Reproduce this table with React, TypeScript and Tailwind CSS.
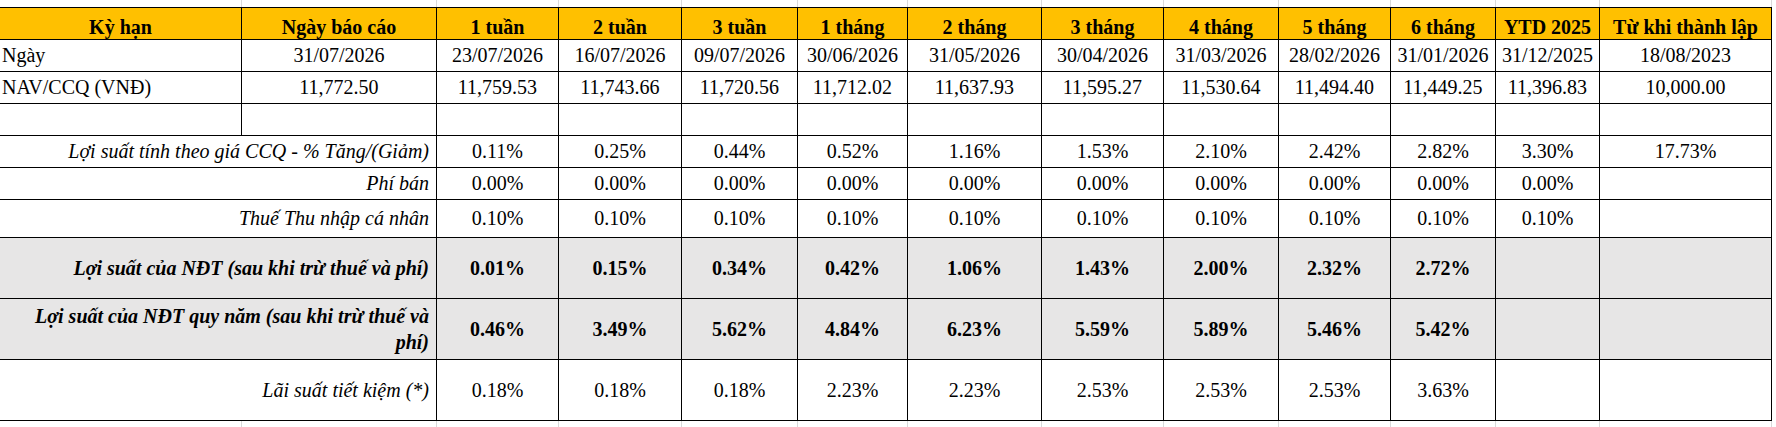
import React from "react";

const grid =
  "grid grid-cols-[242px_195px_122px_123px_116px_110px_134px_122px_115px_112px_105px_104px_172px] w-[1772px]";

const headers = [
  "Kỳ hạn",
  "Ngày báo cáo",
  "1 tuần",
  "2 tuần",
  "3 tuần",
  "1 tháng",
  "2 tháng",
  "3 tháng",
  "4 tháng",
  "5 tháng",
  "6 tháng",
  "YTD 2025",
  "Từ khi thành lập",
];

const dates = [
  "31/07/2026",
  "23/07/2026",
  "16/07/2026",
  "09/07/2026",
  "30/06/2026",
  "31/05/2026",
  "30/04/2026",
  "31/03/2026",
  "28/02/2026",
  "31/01/2026",
  "31/12/2025",
  "18/08/2023",
];

const navs = [
  "11,772.50",
  "11,759.53",
  "11,743.66",
  "11,720.56",
  "11,712.02",
  "11,637.93",
  "11,595.27",
  "11,530.64",
  "11,494.40",
  "11,449.25",
  "11,396.83",
  "10,000.00",
];

type Row = {
  label: React.ReactNode;
  values: string[];
  h: string;
  bold?: boolean;
  gray?: boolean;
  lh?: string;
};

const rows: Row[] = [
  {
    label: "Lợi suất tính theo giá CCQ - % Tăng/(Giảm)",
    values: ["0.11%", "0.25%", "0.44%", "0.52%", "1.16%", "1.53%", "2.10%", "2.42%", "2.82%", "3.30%", "17.73%"],
    h: "h-[32px]",
  },
  {
    label: "Phí bán",
    values: ["0.00%", "0.00%", "0.00%", "0.00%", "0.00%", "0.00%", "0.00%", "0.00%", "0.00%", "0.00%", ""],
    h: "h-[32px]",
  },
  {
    label: "Thuế Thu nhập cá nhân",
    values: ["0.10%", "0.10%", "0.10%", "0.10%", "0.10%", "0.10%", "0.10%", "0.10%", "0.10%", "0.10%", ""],
    h: "h-[38px]",
  },
  {
    label: "Lợi suất của NĐT (sau khi trừ thuế và phí)",
    values: ["0.01%", "0.15%", "0.34%", "0.42%", "1.06%", "1.43%", "2.00%", "2.32%", "2.72%", "", ""],
    h: "h-[61px]",
    bold: true,
    gray: true,
  },
  {
    label: (
      <>
        Lợi suất của NĐT quy năm (sau khi trừ thuế và
        <br />
        phí)
      </>
    ),
    values: ["0.46%", "3.49%", "5.62%", "4.84%", "6.23%", "5.59%", "5.89%", "5.46%", "5.42%", "", ""],
    h: "h-[61px]",
    bold: true,
    gray: true,
    lh: "leading-[26px]",
  },
  {
    label: "Lãi suất tiết kiệm (*)",
    values: ["0.18%", "0.18%", "0.18%", "2.23%", "2.23%", "2.53%", "2.53%", "2.53%", "3.63%", "", ""],
    h: "h-[61px]",
  },
];

function GridStrip({ h }: { h: string }) {
  return (
    <div className={grid}>
      {headers.map((_, i) => (
        <div key={i} className={`${h} border-r border-[#d9d9d9]`} />
      ))}
    </div>
  );
}

export default function App() {
  return (
    <div className="w-[1776px] h-[427px] bg-white text-black text-[20px] leading-[23px] [font-family:'Liberation_Serif','Times_New_Roman',serif] overflow-hidden">
      <GridStrip h="h-[7px]" />
      <div className={`${grid} border-t border-black`}>
        {headers.map((t) => (
          <div
            key={t}
            className="h-[32px] bg-[#ffc000] border-r border-b border-black flex items-end justify-center font-bold whitespace-nowrap"
          >
            {t}
          </div>
        ))}

        <div className="h-[32px] border-r border-b border-black flex items-center pl-[2px]">Ngày</div>
        {dates.map((d, i) => (
          <div key={i} className="h-[32px] border-r border-b border-black flex items-center justify-center whitespace-nowrap">
            {d}
          </div>
        ))}

        <div className="h-[32px] border-r border-b border-black flex items-center pl-[2px]">NAV/CCQ (VNĐ)</div>
        {navs.map((d, i) => (
          <div key={i} className="h-[32px] border-r border-b border-black flex items-center justify-center">
            {d}
          </div>
        ))}

        {headers.map((_, i) => (
          <div key={i} className="h-[32px] border-r border-b border-black" />
        ))}

        {rows.map((r, ri) => (
          <React.Fragment key={ri}>
            <div
              className={`${r.h} col-span-2 border-r border-b border-black flex items-center justify-end text-right italic pr-[7px] ${
                r.bold ? "font-bold" : ""
              } ${r.gray ? "bg-[#e7e6e6]" : ""} ${r.lh ?? ""}`}
            >
              <span>{r.label}</span>
            </div>
            {r.values.map((v, i) => (
              <div
                key={i}
                className={`${r.h} border-r border-b border-black flex items-center justify-center ${
                  r.bold ? "font-bold" : ""
                } ${r.gray ? "bg-[#e7e6e6]" : ""}`}
              >
                {v}
              </div>
            ))}
          </React.Fragment>
        ))}
      </div>
      <GridStrip h="h-[6px]" />
    </div>
  );
}
